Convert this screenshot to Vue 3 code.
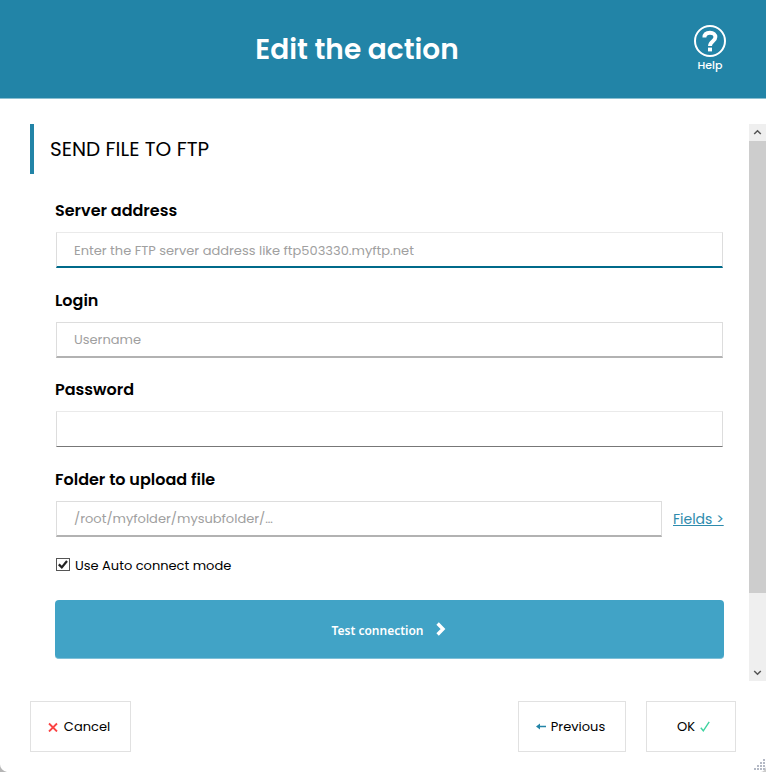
<script setup>
import { reactive, ref } from 'vue'

const form = reactive({
  server: '',
  login: '',
  password: '',
  folder: '',
})

const autoConnect = ref(true)

const fields = [
  {
    key: 'server',
    label: 'Server address',
    type: 'text',
    placeholder: 'Enter the FTP server address like ftp503330.myftp.net',
  },
  { key: 'login', label: 'Login', type: 'text', placeholder: 'Username' },
  { key: 'password', label: 'Password', type: 'password', placeholder: '' },
  { key: 'folder', label: 'Folder to upload file', type: 'text', placeholder: '/root/myfolder/mysubfolder/…' },
]
</script>

<template>
  <div class="dialog">
    <header class="header">
      <h1 class="header__title">Edit the action</h1>
      <div class="help">
        <svg class="help__icon" width="32" height="32" viewBox="0 0 32 32" fill="none" stroke="#fff">
          <circle cx="16" cy="16" r="15" stroke-width="2" />
          <path d="M10.4 12.6C10.4 9.4 12.6 7.7 16 7.7s5.4 1.8 5.4 4.4c0 4.4-5.4 4-5.4 9" stroke-width="3.9" />
          <path d="M16 22.6v3.8" stroke-width="4" />
        </svg>
        <span class="help__label">Help</span>
      </div>
    </header>

    <div class="body">
      <main class="content">
        <h2 class="section-title"><span>SEND FILE TO FTP</span></h2>

        <div v-for="field in fields" :key="field.key" class="field">
          <label class="field__label" :for="field.key">{{ field.label }}</label>
          <div class="field__row">
            <input
              :id="field.key"
              v-model="form[field.key]"
              class="field__input"
              :class="`field__input--${field.key}`"
              :type="field.type"
              :placeholder="field.placeholder"
            />
            <a v-if="field.key === 'folder'" class="field__link">Fields &gt;</a>
          </div>
        </div>

        <label class="check">
          <input v-model="autoConnect" class="check__native" type="checkbox" />
          <svg width="14" height="14" viewBox="0 0 14 14" fill="none">
            <rect x=".5" y=".5" width="13" height="12" fill="#fff" stroke="#555" />
            <path v-if="autoConnect" d="M2.8 6.4l3 3L11 3" stroke="#222" stroke-width="2.2" />
          </svg>
          <span class="check__label">Use Auto connect mode</span>
        </label>

        <button class="test" type="button">
          <span>Test connection</span>
          <svg class="test__arrow" width="10" height="14" viewBox="0 0 10 14" fill="none" stroke="#fff" stroke-width="3.4">
            <path d="M1.6 1.5L7 7l-5.4 5.5" />
          </svg>
        </button>
      </main>

      <div class="scrollbar">
        <svg class="scrollbar__arrow" width="17" height="17" viewBox="0 0 17 17" fill="none" stroke="#555" stroke-width="1.5">
          <path d="M5.2 10l3.3-3.3L11.8 10" />
        </svg>
        <div class="scrollbar__thumb"></div>
        <svg class="scrollbar__arrow" width="17" height="17" viewBox="0 0 17 17" fill="none" stroke="#555" stroke-width="1.5">
          <path d="M5.2 7l3.3 3.3L11.8 7" />
        </svg>
      </div>
    </div>

    <footer class="footer">
      <button class="btn btn--cancel" type="button">
        <svg width="10" height="10" viewBox="0 0 10 10" fill="none" stroke="#fb4444" stroke-width="1.8">
          <path d="M1 1.5l8 8M9 1.5l-8 8" />
        </svg>
        <span>Cancel</span>
      </button>
      <button class="btn btn--previous" type="button">
        <svg width="10" height="8" viewBox="0 0 10 8">
          <path d="M0 3.5L4 .5v2.2h6v1.6H4v2.2z" fill="#2284a7" />
        </svg>
        <span>Previous</span>
      </button>
      <button class="btn btn--ok" type="button">
        <span>OK</span>
        <svg width="10" height="11" viewBox="0 0 10 11" fill="none" stroke="#3fd3a0" stroke-width="1.4">
          <path d="M.8 6.8l2.5 3L9.2.8" />
        </svg>
      </button>
    </footer>

    <svg class="corner" width="7" height="8" viewBox="0 0 7 8">
      <path d="M0 0a8 8 0 0 0 7 8H0z" fill="#b5b5b5" />
    </svg>
    <svg class="grip" width="14" height="14" viewBox="0 0 14 14">
      <path d="M14 8a6 6 0 0 1-6 6h6z" fill="#ccc" />
      <g fill="#b4b9c5">
        <path d="M11 1h2v2h-2zM11 4h2v2h-2zM8 4h2v2H8zM11 7h2v2h-2zM8 7h2v2H8zM5 7h2v2H5zM11 10h2v2h-2zM8 10h2v2H8zM5 10h2v2H5zM2 10h2v2H2z" />
      </g>
    </svg>
  </div>
</template>

<style>
body {
  margin: 0;
  background: #fff;
}
</style>

<style scoped>
.dialog {
  position: relative;
  box-sizing: border-box;
  display: flex;
  flex-direction: column;
  width: 766px;
  height: 772px;
  overflow: hidden;
  background: #fff;
  color: #000;
  font-family: Poppins, Inter, 'Open Sans', sans-serif;
  font-size: 13px;
}

button,
input {
  font-family: inherit;
}

.header {
  display: grid;
  grid-template-columns: 1fr auto 1fr;
  box-sizing: border-box;
  height: 99px;
  padding: 0 40px 0 31px;
  flex: none;
  background: #2284a7;
  border-bottom: 1px solid #8abfd1;
  color: #fff;
}

.header__title {
  grid-column: 2;
  margin: 0;
  padding-right: 43px;
  font-size: 28px;
  font-weight: 600;
  line-height: 100px;
  white-space: nowrap;
}

.help {
  display: flex;
  flex-direction: column;
  align-items: center;
  justify-self: end;
  width: 32px;
  padding-top: 25px;
}

.help__icon {
  flex: none;
}

.help__label {
  margin-top: 1px;
  font-size: 11px;
  font-weight: 500;
  line-height: 15px;
}

.body {
  display: flex;
  height: 557px;
  margin-top: 25px;
  flex: none;
}

.content {
  flex: 1;
  padding: 0 25px 0 30px;
}

.section-title {
  box-sizing: border-box;
  height: 50px;
  margin: 0 0 21px;
  padding-left: 16px;
  border-left: 4px solid #2284a7;
  font-size: 20px;
  font-weight: 400;
  line-height: 51px;
}

.field {
  height: 89.5px;
  padding-left: 25px;
}

.field__label {
  display: block;
  height: 37.4px;
  font-size: 16px;
  font-weight: 600;
  line-height: 31px;
}

.field__row {
  display: flex;
  align-items: center;
  padding: 0 1px;
}

.field__input {
  box-sizing: border-box;
  flex: 1;
  min-width: 0;
  height: 36px;
  padding: 1px 17px 0;
  border: 1px solid #ddd;
  border-bottom: 2px solid #b2b2b2;
  border-radius: 0;
  outline: none;
  background: #fff;
  font-size: 13px;
}

.field__input--server {
  padding-top: 3px;
  border-top-color: #eaeaea;
  border-bottom-color: #006a8a;
}

.field__input--password {
  border-top-color: #eaeaea;
  border-bottom: 1px solid #777;
}

.field__input::placeholder {
  color: #a0a0a0;
  opacity: 1;
}

.field__link {
  width: 51px;
  margin: 0 -1px 0 11px;
  padding-top: 1px;
  color: #2e8bad;
  font-size: 14px;
  text-decoration: underline;
  text-underline-offset: 1px;
  white-space: nowrap;
}

.check {
  display: flex;
  align-items: center;
  gap: 5px;
  height: 14px;
  margin: 5px 0 28px 26px;
}

.check__native {
  display: none;
}

.check__label {
  padding-top: 2px;
  white-space: nowrap;
}

.test {
  display: flex;
  align-items: center;
  justify-content: center;
  gap: 12px;
  box-sizing: border-box;
  width: 669px;
  height: 59px;
  margin-left: 25px;
  padding: 2px 2px 0 0;
  border: 0;
  border-bottom: 1px solid #7fc0d8;
  border-radius: 4px;
  background: #41a3c6;
  color: #fff;
  font-family: 'Noto Sans', sans-serif;
  font-size: 12px;
  font-weight: 600;
}

.test__arrow {
  margin-bottom: 2px;
}

.scrollbar {
  display: flex;
  flex-direction: column;
  width: 17px;
  background: #efefef;
}

.scrollbar__arrow {
  flex: none;
}

.scrollbar__thumb {
  height: 452px;
  margin-bottom: auto;
  background: #cdcdcd;
}

.footer {
  display: flex;
  gap: 20px;
  padding: 20px 30px 0;
}

.btn {
  display: flex;
  align-items: center;
  justify-content: center;
  gap: 6px;
  box-sizing: border-box;
  height: 51px;
  padding: 0;
  border: 1px solid #e1e1e1;
  background: #fff;
  color: #000;
  font-size: 13px;
}

.btn--cancel {
  width: 101px;
  margin-right: auto;
  padding-right: 3px;
}

.btn--previous {
  gap: 5px;
  width: 108px;
  padding-right: 3px;
}

.btn--ok {
  gap: 5px;
  width: 90px;
  padding-left: 5px;
}

.corner {
  position: absolute;
  bottom: 0;
  left: 0;
}

.grip {
  position: absolute;
  right: 0;
  bottom: 0;
}
</style>
